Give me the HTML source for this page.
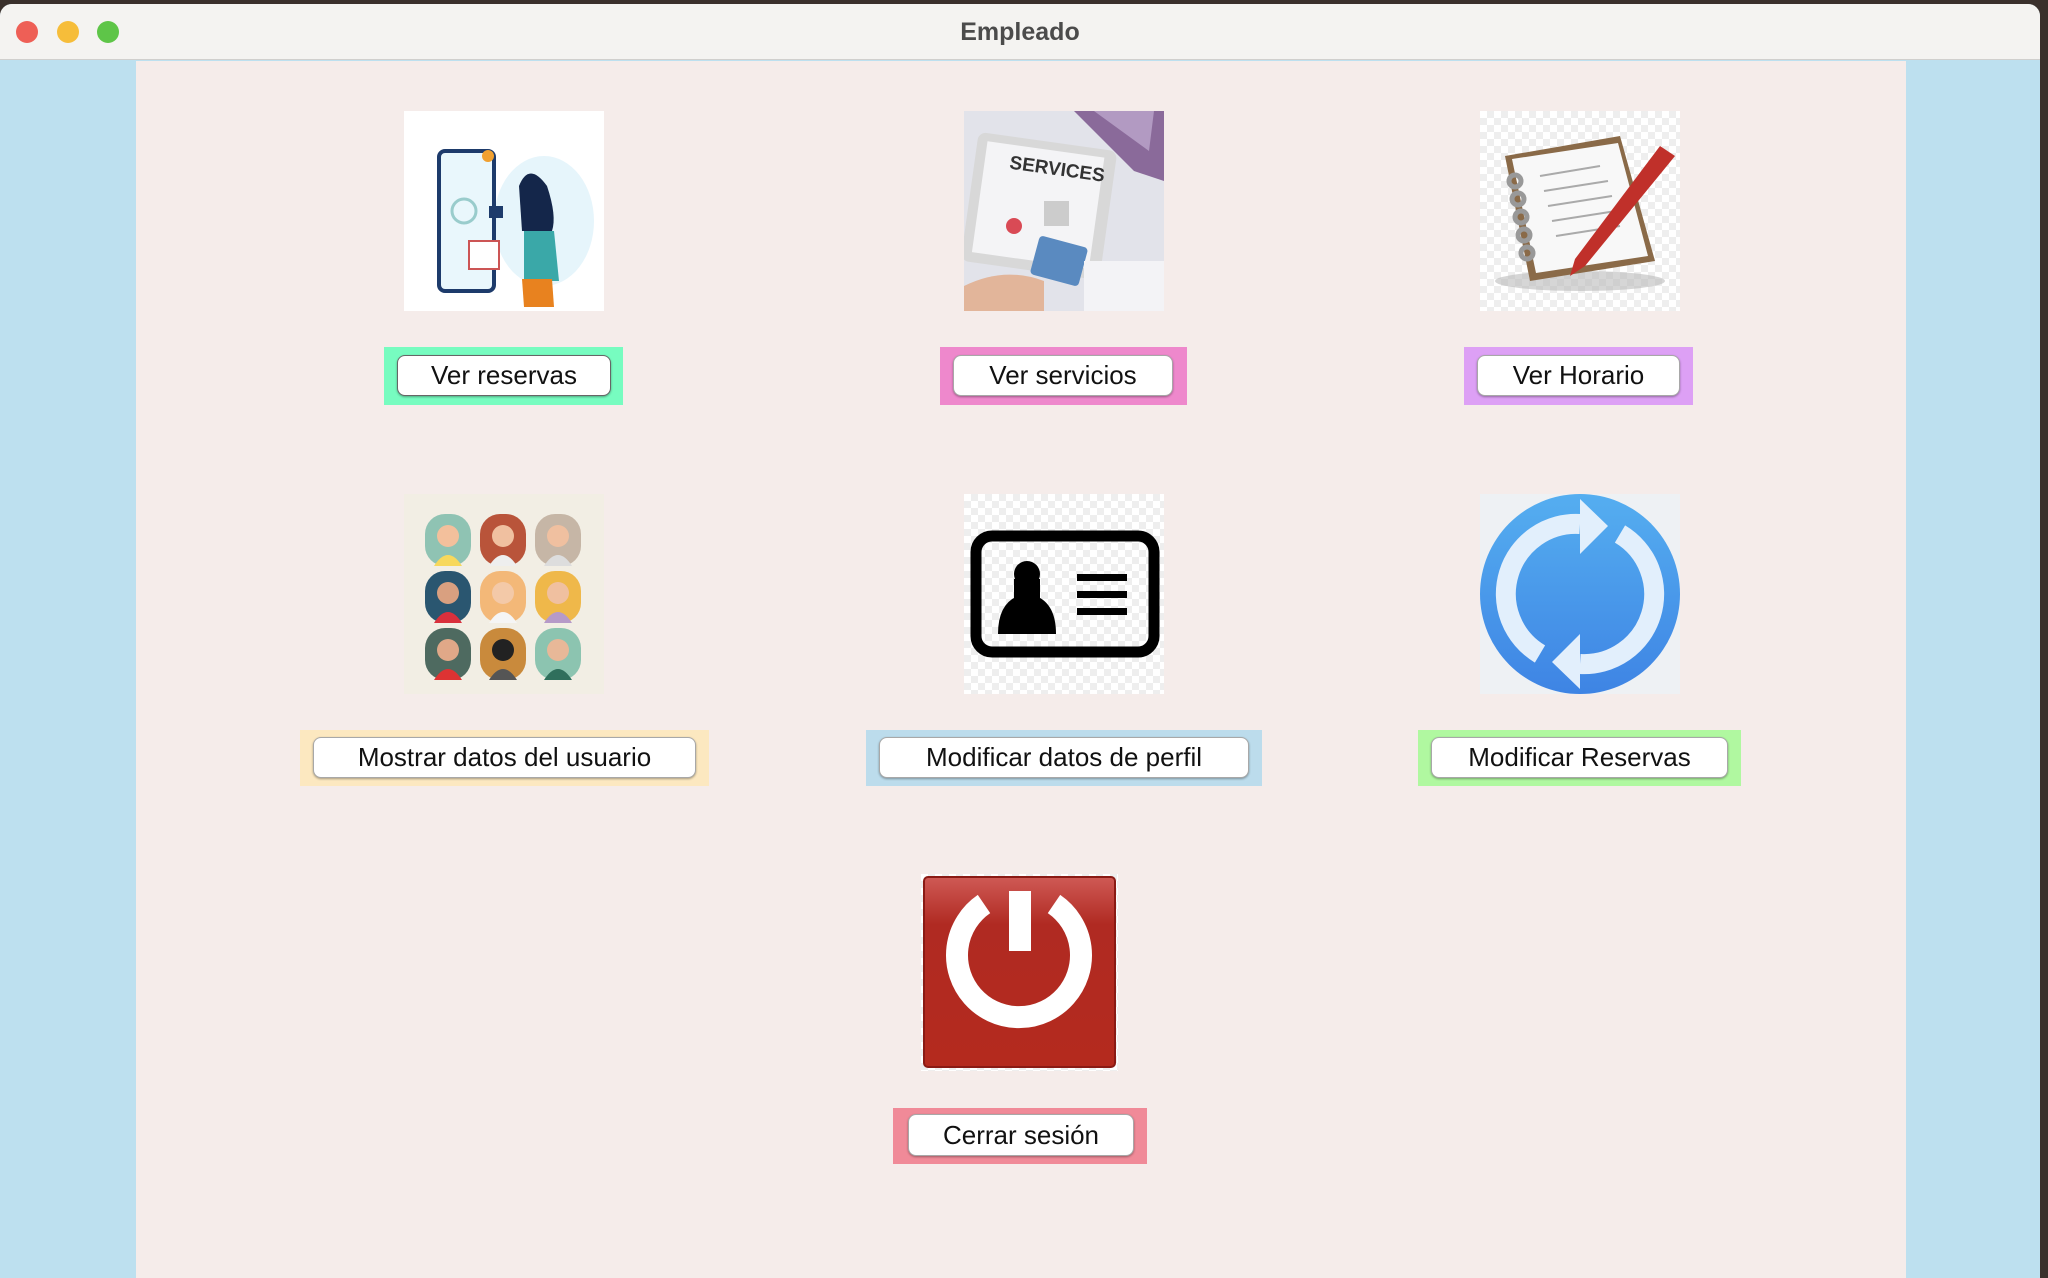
<!DOCTYPE html>
<html><head><meta charset="utf-8"><style>
*{margin:0;padding:0;box-sizing:border-box}
body{width:2048px;height:1278px;overflow:hidden;background:#3a302c;font-family:"Liberation Sans","DejaVu Sans",sans-serif;position:relative}
.win{position:absolute;left:0;top:4px;width:2040px;height:1274px;background:#bde0ef;border-radius:12px 12px 0 0;overflow:hidden}
.title{position:absolute;left:0;top:0;width:2040px;height:56px;background:#f4f3f1;border-bottom:1px solid #d0cfcd;text-align:center;font-size:25px;font-weight:bold;color:#4b4b4b;line-height:56px}
.dot{position:absolute;top:17px;width:22px;height:22px;border-radius:50%}
.content{position:absolute;left:136px;top:57px;width:1770px;height:1230px;background:#f5ecea}
.a{position:absolute}
.box{position:absolute}
.btn{position:absolute;background:#fff;border:1px solid #a8a8a8;border-radius:8px;box-shadow:0 1px 2px rgba(0,0,0,.35);font-size:26px;color:#111;text-align:center;display:flex;align-items:center;justify-content:center}
.chk{background-color:#fff;background-image:linear-gradient(45deg,#eee 25%,transparent 25%,transparent 75%,#eee 75%),linear-gradient(45deg,#eee 25%,transparent 25%,transparent 75%,#eee 75%);background-size:14px 14px;background-position:0 0,7px 7px}
</style></head><body>
<div class="win">
<div class="title">Empleado
<div class="dot" style="left:16px;background:#ee5f56"></div>
<div class="dot" style="left:57px;background:#f6bd3a"></div>
<div class="dot" style="left:97px;background:#5ec548"></div>
</div>
</div>
<!-- content region in page coords -->
<div class="a" style="left:136px;top:61px;width:1770px;height:1217px;background:#f5ecea"></div>

<!-- row1 images -->
<svg class="a" style="left:404px;top:111px" width="200" height="200" viewBox="0 0 200 200">
<rect width="200" height="200" fill="#fff"/>
<ellipse cx="140" cy="110" rx="50" ry="65" fill="#e6f5fb"/>
<rect x="35" y="40" width="55" height="140" rx="6" fill="#e9f7fc" stroke="#1d3b6b" stroke-width="4"/>
<circle cx="60" cy="100" r="12" fill="none" stroke="#9cc" stroke-width="3"/>
<rect x="65" y="130" width="30" height="28" fill="#fff" stroke="#c55" stroke-width="2"/>
<circle cx="84" cy="45" r="6" fill="#f0a030"/>
<path d="M115 75 q10-25 28 0 q10 30 5 45 l-30 0z" fill="#14264a"/>
<path d="M120 120 l30 0 l5 50 l-35 0z" fill="#3aa8a8"/>
<path d="M118 168 l30 0 l2 28 l-30 0z" fill="#e8821f"/>
<rect x="85" y="95" width="14" height="12" fill="#1d3b6b"/>
</svg>
<svg class="a" style="left:964px;top:111px" width="200" height="200" viewBox="0 0 200 200">
<rect width="200" height="200" fill="#e2e3ea"/>
<path d="M110 0 L200 0 L200 70 L170 60z" fill="#8a6a9a"/>
<path d="M130 0 L190 0 L185 40z" fill="#b29ac2"/>
<rect x="5" y="30" width="140" height="130" rx="8" fill="#d8d8d8" transform="rotate(8 75 95)"/>
<rect x="15" y="38" width="118" height="112" fill="#f4f4f6" transform="rotate(8 75 95)"/>
<text x="40" y="62" font-size="19" font-weight="bold" fill="#333" transform="rotate(8 75 95)">SERVICES</text>
<circle cx="50" cy="115" r="8" fill="#d94a55"/><rect x="80" y="90" width="25" height="25" fill="#ccc"/>
<rect x="70" y="130" width="50" height="40" rx="4" fill="#5a8ac0" transform="rotate(15 95 150)"/>
<path d="M0 175 q40-20 80 -5 l0 30 l-80 0z" fill="#e2b59a"/>
<rect x="120" y="150" width="80" height="50" fill="#f3f3f6"/>
</svg>
<svg class="a chk" style="left:1480px;top:111px" width="200" height="200" viewBox="0 0 200 200">
<ellipse cx="100" cy="170" rx="85" ry="10" fill="#bbb" opacity=".6"/>
<path d="M25 45 L140 25 L175 150 L50 170z" fill="#8a6a48"/>
<path d="M32 48 L138 32 L168 145 L56 162z" fill="#f8f8f8"/>
<g stroke="#aaa" stroke-width="2"><line x1="60" y1="65" x2="120" y2="55"/><line x1="64" y1="80" x2="128" y2="70"/><line x1="68" y1="95" x2="132" y2="85"/><line x1="72" y1="110" x2="136" y2="100"/><line x1="76" y1="125" x2="140" y2="115"/></g>
<g fill="none" stroke="#999" stroke-width="5"><circle cx="35" cy="70" r="6"/><circle cx="38" cy="88" r="6"/><circle cx="41" cy="106" r="6"/><circle cx="44" cy="124" r="6"/><circle cx="47" cy="142" r="6"/></g>
<path d="M180 35 L195 45 L105 155 L90 165 L95 148z" fill="#c0302a"/>
</svg>

<!-- row1 buttons -->
<div class="box" style="left:384px;top:347px;width:239px;height:58px;background:#77fcc0"></div>
<div class="btn" style="left:397px;top:355px;width:214px;height:41px;border-color:#666">Ver reservas</div>
<div class="box" style="left:940px;top:347px;width:247px;height:58px;background:#ee88cc"></div>
<div class="btn" style="left:953px;top:355px;width:220px;height:41px">Ver servicios</div>
<div class="box" style="left:1464px;top:347px;width:229px;height:58px;background:#dda0f5"></div>
<div class="btn" style="left:1477px;top:355px;width:203px;height:41px">Ver Horario</div>

<!-- row2 images -->
<svg class="a" style="left:404px;top:494px" width="200" height="200" viewBox="0 0 200 200">
<rect width="200" height="200" fill="#f2eee4"/>
<g>
<rect x="21" y="20" width="46" height="52" rx="20" fill="#8fc3b3"/><circle cx="44" cy="42" r="11" fill="#f3c09c"/><path d="M30 72 q14-22 28 0z" fill="#f7d85c"/>
<rect x="76" y="20" width="46" height="52" rx="20" fill="#b9543a"/><circle cx="99" cy="42" r="11" fill="#f0c0a0"/><path d="M85 72 q14-22 28 0z" fill="#eee"/>
<rect x="131" y="20" width="46" height="52" rx="20" fill="#c6b6a6"/><circle cx="154" cy="42" r="11" fill="#f0c0a0"/><path d="M140 72 q14-22 28 0z" fill="#ddd"/>
<rect x="21" y="77" width="46" height="52" rx="20" fill="#2a5670"/><circle cx="44" cy="99" r="11" fill="#d9a080"/><path d="M30 129 q14-22 28 0z" fill="#d9303c"/>
<rect x="76" y="77" width="46" height="52" rx="20" fill="#f3b878"/><circle cx="99" cy="99" r="11" fill="#f3c9a8"/><path d="M85 129 q14-22 28 0z" fill="#f5f5f5"/>
<rect x="131" y="77" width="46" height="52" rx="20" fill="#efb84a"/><circle cx="154" cy="99" r="11" fill="#f0c0a0"/><path d="M140 129 q14-22 28 0z" fill="#b69ac8"/>
<rect x="21" y="134" width="46" height="52" rx="20" fill="#4e6a60"/><circle cx="44" cy="156" r="11" fill="#e0a888"/><path d="M30 186 q14-22 28 0z" fill="#d33"/>
<rect x="76" y="134" width="46" height="52" rx="20" fill="#c98a3c"/><circle cx="99" cy="156" r="11" fill="#222"/><path d="M85 186 q14-22 28 0z" fill="#555"/>
<rect x="131" y="134" width="46" height="52" rx="20" fill="#8cc4b0"/><circle cx="154" cy="156" r="11" fill="#e8b898"/><path d="M140 186 q14-22 28 0z" fill="#2f6f5c"/>
</g></svg>
<svg class="a chk" style="left:964px;top:494px" width="200" height="200" viewBox="0 0 200 200">
<rect x="12" y="42" width="178" height="116" rx="16" fill="none" stroke="#000" stroke-width="11"/>
<circle cx="63" cy="80" r="13" fill="#000"/>
<path d="M34 140 q0-30 20-38 l18 0 q20 8 20 38z" fill="#000"/>
<rect x="50" y="85" width="26" height="25" fill="#000"/>
<rect x="113" y="80" width="50" height="7" fill="#000"/><rect x="113" y="97" width="50" height="7" fill="#000"/><rect x="113" y="114" width="50" height="7" fill="#000"/>
</svg>
<svg class="a" style="left:1480px;top:494px" width="200" height="200" viewBox="0 0 200 200">
<rect width="200" height="200" fill="#eef1f4"/>
<defs><linearGradient id="g" x1="0" y1="0" x2="0" y2="1"><stop offset="0" stop-color="#55aef0"/><stop offset="1" stop-color="#3e84e4"/></linearGradient></defs>
<circle cx="100" cy="100" r="100" fill="url(#g)"/>
<path d="M60 160 A70 70 0 0 1 100 30" fill="none" stroke="#e2effc" stroke-width="20"/>
<path d="M140 40 A70 70 0 0 1 100 170" fill="none" stroke="#e2effc" stroke-width="20"/>
<path d="M100 5 L128 32 L100 60z" fill="#e2effc"/>
<path d="M100 140 L72 168 L100 195z" fill="#e2effc"/>
</svg>

<!-- row2 buttons -->
<div class="box" style="left:300px;top:730px;width:409px;height:56px;background:#fce8c0"></div>
<div class="btn" style="left:313px;top:737px;width:383px;height:41px">Mostrar datos del usuario</div>
<div class="box" style="left:866px;top:730px;width:396px;height:56px;background:#bcdcec"></div>
<div class="btn" style="left:879px;top:737px;width:370px;height:41px">Modificar datos de perfil</div>
<div class="box" style="left:1418px;top:730px;width:323px;height:56px;background:#b0f8a0"></div>
<div class="btn" style="left:1431px;top:737px;width:297px;height:41px">Modificar Reservas</div>

<!-- power -->
<svg class="a chk" style="left:921px;top:874px" width="197" height="197" viewBox="0 0 197 197">
<defs><linearGradient id="r" x1="0" y1="0" x2="0" y2="1"><stop offset="0" stop-color="#cf5a55"/><stop offset=".25" stop-color="#b02a22"/><stop offset="1" stop-color="#b42a1e"/></linearGradient></defs>
<rect x="3" y="3" width="191" height="190" rx="4" fill="url(#r)"/>
<rect x="3" y="3" width="191" height="190" rx="4" fill="none" stroke="#8a1a14" stroke-width="2"/>
<path d="M63 30 A62 62 0 1 0 133 30" fill="none" stroke="#fff" stroke-width="22"/>
<rect x="88" y="17" width="22" height="60" fill="#fff"/>
</svg>
<div class="box" style="left:893px;top:1108px;width:254px;height:56px;background:#f08a98"></div>
<div class="btn" style="left:908px;top:1114px;width:226px;height:42px">Cerrar sesión</div>
</body></html>
